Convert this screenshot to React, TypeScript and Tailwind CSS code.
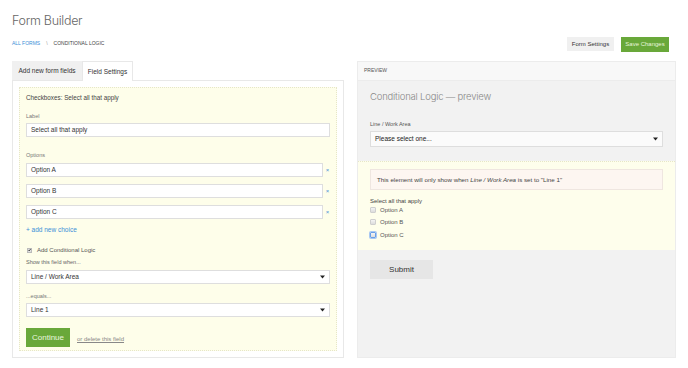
import React from 'react';

const Arrow: React.FC = () => (
  <svg width="5" height="4" viewBox="0 0 5 4" className="shrink-0">
    <path d="M0 0.5 L5 0.5 L2.5 3.5 Z" fill="#222" />
  </svg>
);

const TextBox: React.FC<{ value: string; className?: string }> = ({ value, className = '' }) => (
  <div className={`h-[14px] bg-white border border-[#dedede] flex items-center px-[4px] text-[6.5px] text-[#333] ${className}`}>
    {value}
  </div>
);

const SelectBox: React.FC<{ value: string }> = ({ value }) => (
  <div className="h-[14px] bg-white border border-[#dedede] flex items-center justify-between px-[4px] text-[6.5px] text-[#333]">
    <span>{value}</span>
    <Arrow />
  </div>
);

const PreviewCheck: React.FC<{ label: string; focused?: boolean }> = ({ label, focused }) => (
  <div className="h-[10px] flex items-center gap-[4px]">
    <span
      className={`w-[6px] h-[6px] rounded-[1px] bg-gradient-to-b from-[#f4f4f4] to-[#dcdcdc] ${
        focused ? 'border border-[#6aa0e8] shadow-[0_0_0_1px_#a9c8f2]' : 'border border-[#cfcfcf]'
      }`}
    />
    <span className="text-[6px] text-[#555]">{label}</span>
  </div>
);

const App: React.FC = () => {
  const options = ['Option A', 'Option B', 'Option C'];

  return (
    <div className="w-[688px] h-[368px] bg-white px-[12px] pt-[12px] font-['Liberation_Sans',Arial,sans-serif] text-[#333] overflow-hidden">
      <h1 className="h-[18px] flex items-center text-[12.5px] font-light tracking-[-0.3px] text-[#666] font-['Inter','Liberation_Sans',sans-serif]">
        Form Builder
      </h1>

      <div className="mt-[6px] h-[16px] flex items-center justify-between">
        <div className="flex items-center gap-[6px] text-[5px] uppercase">
          <span className="text-[#3b8fd8]">All Forms</span>
          <span className="text-[#999]">\</span>
          <span className="text-[#444]">Conditional Logic</span>
        </div>
        <div className="flex items-center gap-[7px] mr-[7px]">
          <button className="h-[14px] w-[47px] bg-[#f0f0f0] text-[6px] text-[#333]">Form Settings</button>
          <button className="h-[15px] w-[48px] bg-[#69a83a] text-[6px] text-[#e8f5dc]">Save Changes</button>
        </div>
      </div>

      <div className="mt-[9px] h-[297px] flex gap-[13px]">
        {/* Editor */}
        <div className="w-[332px] flex flex-col">
          <div className="h-[19px] flex text-[6.5px] text-[#333]">
            <div className="w-[70px] bg-[#f0f0f0] flex items-center justify-center">Add new form fields</div>
            <div className="w-[51px] bg-white border border-b-0 border-[#e8e8e8] flex items-center justify-center relative -mb-px z-10">
              Field Settings
            </div>
          </div>
          <div className="flex-1 border border-[#e8e8e8] p-[6px] flex">
            <div className="flex-1 bg-[#fefeea] border border-dotted border-[#e6e6c8] px-[6px] pt-[6px]">
              <div className="text-[6.3px] leading-[8px] text-[#444]">Checkboxes: Select all that apply</div>
              <div className="mt-[10px] text-[5.5px] leading-[8px] text-[#777]">Label</div>
              <TextBox value="Select all that apply" className="mt-[3px]" />
              <div className="mt-[14px] text-[5.5px] leading-[8px] text-[#777]">Options</div>
              {options.map((o, i) => (
                <div key={o} className={`flex items-center ${i === 0 ? 'mt-[4px]' : 'mt-[7px]'}`}>
                  <TextBox value={o} className="flex-1" />
                  <span className="w-[7px] pl-[2px] text-center text-[6px] text-[#4a90d9]">×</span>
                </div>
              ))}
              <div className="mt-[7px] text-[6.5px] leading-[8px] text-[#3b8fd8]">+ add new choice</div>
              <div className="mt-[12px] h-[8px] flex items-center gap-[5px] pl-[1px]">
                <span className="w-[5px] h-[5px] bg-[#e0e0e0] border border-[#bbb] flex items-center justify-center">
                  <svg width="4" height="4" viewBox="0 0 4 4">
                    <path d="M0.5 2 L1.6 3.2 L3.6 0.6" stroke="#111" strokeWidth="0.9" fill="none" />
                  </svg>
                </span>
                <span className="text-[6px] text-[#555]">Add Conditional Logic</span>
              </div>
              <div className="mt-[4px] text-[5.5px] leading-[8px] text-[#666]">Show this field when...</div>
              <div className="mt-[4px]">
                <SelectBox value="Line / Work Area" />
              </div>
              <div className="mt-[8px] text-[5.5px] leading-[8px] text-[#777]">...equals...</div>
              <div className="mt-[3px]">
                <SelectBox value="Line 1" />
              </div>
              <div className="mt-[11px] flex items-center gap-[7px]">
                <button className="h-[19px] w-[44px] bg-[#69a83a] text-[8px] text-[#eaf6df]">Continue</button>
                <span className="text-[6px] text-[#888] underline mt-[4px]">or delete this field</span>
              </div>
            </div>
          </div>
        </div>

        {/* Preview */}
        <div className="w-[319px] flex flex-col border border-[#ececec]">
          <div className="h-[19px] bg-[#f8f8f8] border-b border-[#ececec] flex items-center px-[6px] text-[5px] text-[#555] uppercase">
            Preview
          </div>
          <div className="h-[80px] bg-[#f2f2f2] px-[12px] pt-[10px]">
            <div className="h-[12px] flex items-center text-[9.5px] font-light tracking-[-0.2px] text-[#888] font-['Inter','Liberation_Sans',sans-serif]">
              Conditional Logic — preview
            </div>
            <div className="mt-[17px] text-[5.5px] leading-[8px] text-[#555]">Line / Work Area</div>
            <div className="mt-[3px] h-[16px] bg-[#fbfbfb] border border-[#dedede] flex items-center justify-between px-[4px] text-[6.5px] text-[#222]">
              <span>Please select one...</span>
              <Arrow />
            </div>
          </div>
          <div className="h-[89px] bg-[#fefeec] border-t border-dotted border-[#e6e6c8] px-[12px] pt-[7px]">
            <div className="h-[21px] bg-[#fdf6f1] border border-[#efe6e0] flex items-center px-[6px] text-[6.2px] text-[#444]">
              This element will only show when&nbsp;<em>Line / Work Area</em>&nbsp;is set to "Line 1"
            </div>
            <div className="mt-[7px] text-[6px] leading-[8px] text-[#444]">Select all that apply</div>
            <PreviewCheck label="Option A" />
            <div className="mt-[2px]">
              <PreviewCheck label="Option B" />
            </div>
            <div className="mt-[3px]">
              <PreviewCheck label="Option C" focused />
            </div>
          </div>
          <div className="flex-1 bg-[#f2f2f2] px-[12px] pt-[10px] flex items-start">
            <button className="h-[19px] w-[63px] bg-[#e6e6e6] text-[8px] text-[#333]">Submit</button>
          </div>
        </div>
      </div>
    </div>
  );
};

export default App;
